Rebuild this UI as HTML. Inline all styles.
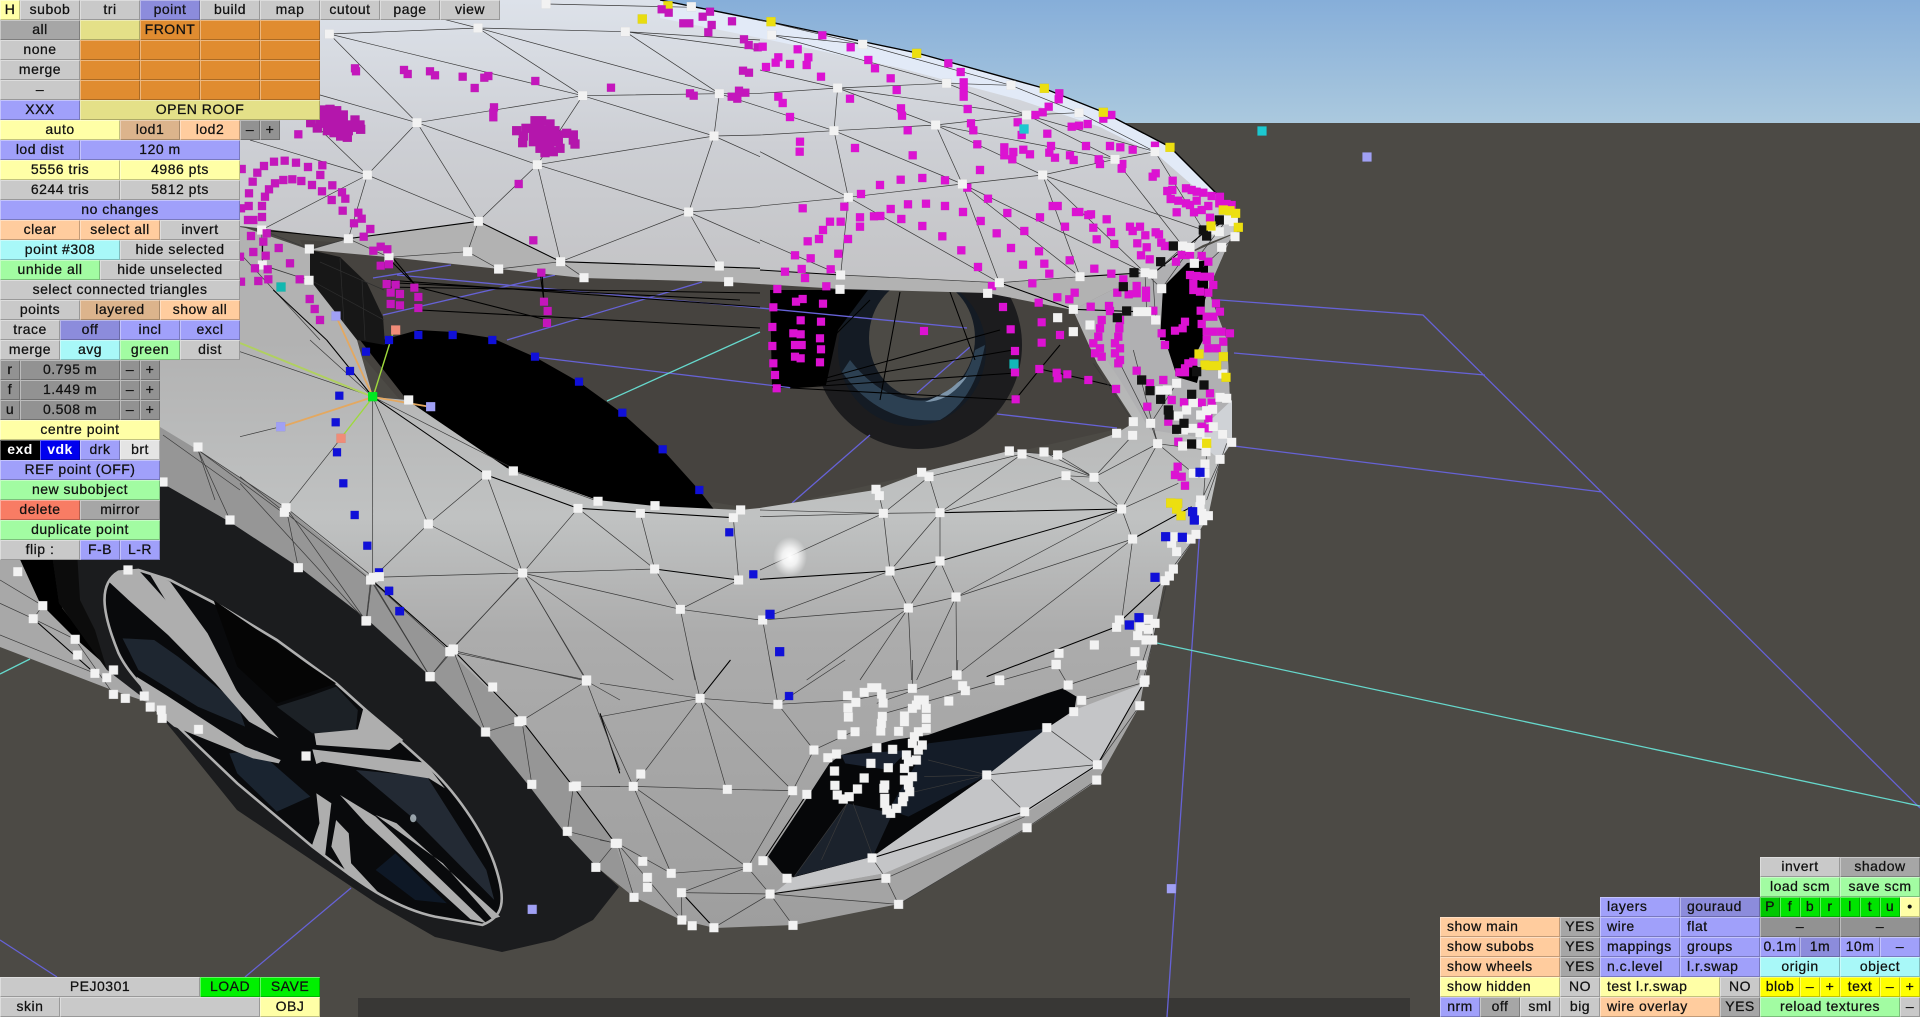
<!DOCTYPE html>
<html><head><meta charset="utf-8"><title>Car editor</title>
<style>
html,body{margin:0;padding:0;width:1920px;height:1017px;overflow:hidden;background:#4c4a45}
svg{position:absolute;left:0;top:0}
svg path{vector-effect:non-scaling-stroke;fill:none}
.w{stroke:#3a3a3a;stroke-width:.7}
.k{stroke:#000;stroke-width:1.05}
.p{stroke-linecap:square;stroke-width:9.2}
.sh{filter:drop-shadow(.7px .7px 0 rgba(0,0,0,.28))}
.b{position:absolute;height:20px;line-height:19px;text-align:center;font:14px/19px "Liberation Sans",sans-serif;letter-spacing:.5px;color:#111;-webkit-text-stroke:.25px #111;white-space:nowrap;box-sizing:border-box;box-shadow:inset 1px 1px 0 rgba(255,255,255,.38),inset -1px -1px 0 rgba(0,0,0,.24)}
.g{background:#c9c9c9}.d{background:#a6a6a6}.m{background:#929292}.v{background:#a0a0fa}.V{background:#8c8cdc}
.y{background:#ffffa6}.Y{background:#ffff00}.e{background:#e4e088}.o{background:#e08c30}.c{background:#ffcc9e}.t{background:#dcb48c}
.a{background:#a8f8f8}.n{background:#a2fca2}.N{background:#00f000}.r{background:#f87c64}.l{text-align:left;padding-left:7px}
</style></head><body>
<svg width="1920" height="1017" viewBox="0 0 1920 1017" xmlns="http://www.w3.org/2000/svg">
<defs>
<linearGradient id="sky" x1="0" y1="0" x2="0" y2="1"><stop offset="0" stop-color="#86aed9"/><stop offset="1" stop-color="#abc9de"/></linearGradient>
<linearGradient id="hood" gradientUnits="userSpaceOnUse" x1="0" y1="0" x2="0" y2="290"><stop offset="0" stop-color="#dde2ea"/><stop offset=".5" stop-color="#cdcfd4"/><stop offset="1" stop-color="#c3c3c5"/></linearGradient>
<linearGradient id="body" gradientUnits="userSpaceOnUse" x1="0" y1="340" x2="0" y2="930"><stop offset="0" stop-color="#b2b2b2"/><stop offset=".3" stop-color="#c0c2c2"/><stop offset=".5" stop-color="#acacac"/><stop offset="1" stop-color="#9e9e9e"/></linearGradient>
<radialGradient id="spec"><stop offset="0" stop-color="#fff"/><stop offset=".45" stop-color="#fff" stop-opacity=".8"/><stop offset="1" stop-color="#fff" stop-opacity="0"/></radialGradient>
</defs>
<rect width="1920" height="124" fill="url(#sky)"/>
<rect y="123" width="1920" height="894" fill="#4c4a45"/>
<rect x="358" y="998" width="1052" height="19" fill="#383735"/>

<!-- interior under hood -->
<polygon points="300,240 1100,290 1097,363 1135,425 760,510 700,500 400,400 340,330" fill="#46433f"/>

<!-- far wheel -->
<circle cx="918" cy="345" r="104" fill="#1c1c1e"/>
<ellipse cx="912" cy="350" rx="74" ry="76" fill="#141b24"/>
<path d="M842,372Q880,425 940,420Q975,400 985,345L975,350Q965,392 930,400Q885,405 850,360Z" style="fill:#2c4052"/>
<path d="M925,402Q950,402 968,375L940,395Z" style="fill:#7d95aa"/>
<ellipse cx="922" cy="338" rx="53" ry="60" fill="#4c4a45"/>
<polygon points="770,290 868,290 838,330 826,385 795,388 772,388" fill="#000"/>

<!-- black hole and dark inner wheel -->
<polygon points="360,340 383,340 418,330 453,332 492,338 535,357 579,382 622,413 663,450 699,490 716,512 640,510 597,500 507,468 407,400" fill="#000"/>
<polygon points="310,250 340,257 367,283 383,317 385,345 357,340 310,280" fill="#171717"/>
<path class="w" d="M320,262L384,290M314,282L384,320M340,258L345,340M362,280L365,340" style="stroke:#2e2e2e"/>

<!-- ground / interior lines -->
<g style="stroke-width:1.3">
<path d="M373,278L451,265M397,275L760,308L967,328M383,315L555,275M507,340L702,282M535,357L793,388M997,414L1117,428M792,503L870,435M917,393L970,347M1220,300L1423,315L1920,808M1234,353L1485,375M1234,446L1602,492M1200,527L1167,1017M0,940L57,977M351,888L245,977" stroke="#6662d6"/>
<path d="M1157,643L1920,806M607,401L760,332M0,674L30,659" stroke="#66d8cc"/>
</g>
<path class="k" d="M383,287L760,293M387,280L760,307M420,310L760,328M417,287L547,320M393,258L417,287M397,283L740,300M542,273L544,302M790,388L1013,350M790,388L1016,373M790,388L1015,400M790,388L1000,330M1015,400L1040,369M1040,369L1088,380M1040,369L1060,345M1088,380L1130,390M870,300L830,340M900,292L880,400M950,292L975,360"/>

<!-- body lower -->
<polygon points="240,226 310,250 310,280 357,340 373,397 407,400 507,468 597,500 655,506 740,510 760,508 875,490 922,472 1009,451 1057,455 1117,433 1135,422 1097,363 1073,310 1145,273 1232,235 1208,290 1227,340 1232,442 1220,460 1208,517 1197,535 1173,570 1163,587 1153,640 1144,682 1140,705 1098,780 1027,828 899,904 794,925 715,928 681,920 634,897 597,867 300,570 230,522 160,482 0,300" fill="url(#body)"/>
<polygon points="160,427 198,450 286,508 373,580 450,652 522,721 573,787 615,843 634,897 597,867 565,833 530,787 486,733 431,677 368,620 303,570 230,522 160,482" fill="#969696"/>
<!-- fender side shade -->
<polygon points="1073,310 1145,273 1232,235 1208,290 1227,340 1232,442 1150,430 1120,380" fill="#b0b0b2"/>
<polygon points="1200,430 1232,400 1232,442 1220,460 1196,440" fill="#cfd2d6"/>
<!-- eye -->
<polygon points="1160,340 1163,287 1187,263 1208,260 1208,290 1205,300 1203,340 1193,360 1200,370 1197,383 1177,377 1165,340" fill="#000"/>

<!-- hood -->
<polygon points="240,0 660,0 770,22 917,53 1043,88 1103,112 1170,147 1220,197 1237,213 1237,232 1203,245 1173,262 1145,273 1080,277 999,283 841,275 760,270 720,267 561,262 478,221 348,239 240,226" fill="url(#hood)"/>
<polygon points="660,0 770,22 917,53 1043,88 1103,112 1170,147 1220,197 1200,192 1160,157 1100,127 1020,100 900,68 770,40 660,18" fill="#e2eaf7"/>
<polygon points="310,250 348,239 478,221 561,262 720,267 841,275 999,283 1080,277 1145,273 1073,310 987,293 840,289 728,282 583,278 388,257" fill="#b2b2b2"/>
<path d="M660,0L770,22L917,53L1043,88L1103,112L1170,147L1220,197" stroke="#000" stroke-width="1.4"/>

<!-- far-left gray -->
<polygon points="0,555 18,555 40,603 75,638 111,670 150,703 112,690 0,647" fill="#a8a8a8"/>
<polygon points="18,555 75,555 62,608 111,670 75,638 40,603" fill="#000"/>

<!-- tyre -->
<polygon points="160,482 230,522 303,570 368,620 431,677 486,733 530,787 565,833 597,867 619,887 593,920 554,940 502,952 435,937 376,903 316,863 237,810 178,737 150,703 107,670 59,603 50,540 100,470" fill="#1b1c1e"/>
<polygon points="50,540 75,520 80,600 95,630 107,670 59,603" fill="#0c0c0c"/>

<!-- rim, zoom coords -->
<g transform="translate(0,570) scale(.3954,.3333)">
<path d="M300,5C250,40 255,120 300,250C320,300 345,330 450,470L600,640L790,830C880,910 980,1010 1100,1040L1220,1065C1270,1040 1285,1000 1250,880C1220,780 1150,660 1075,580L1000,500L850,340L700,210L560,110L430,30L350,0Z" style="fill:#090a0c;stroke:#b0b0b0;stroke-width:2.6"/>
<polygon points="310,205 390,210 450,260 600,400 620,470 500,410 350,300" fill="#1e2630"/>
<polygon points="580,550 650,540 785,680 700,725 600,610" fill="#1a2430"/>
<polygon points="900,600 1080,620 1230,900 1250,990 1050,750" fill="#232a34"/>
<polygon points="780,380 850,350 905,420 900,480 790,490 700,410" fill="#1c2126"/>
<polygon points="950,900 1000,850 1130,1000 1050,990" fill="#0e1826"/>
<polygon points="540,90 700,220 850,340 700,400 600,290" fill="#050505"/>
<g fill="#aeaeae">
<polygon points="295,5 350,0 480,170 610,380 705,505 630,455 545,340 425,195 325,90 275,35"/>
<polygon points="375,5 430,35 525,190 615,400 598,408 495,240"/>
<polygon points="345,320 420,375 620,530 710,570 705,580 640,565 440,470 375,405"/>
<polygon points="795,490 905,478 920,410 1020,510 985,540 800,525"/>
<polygon points="790,538 1075,578 1125,655 1085,625 815,575 800,582"/>
<polygon points="800,670 838,700 822,860 788,830 808,760"/>
<polygon points="850,750 882,790 888,880 955,965 880,915 838,830"/>
<polygon points="860,675 950,740 1230,1060 1190,1048 925,760"/>
<polygon points="950,735 1003,760 1265,1040 1245,1048 1120,880"/>
</g>
<ellipse cx="1045" cy="745" rx="8" ry="12" fill="#b8c4cc" opacity=".8"/>
</g>

<!-- grille, zoom 10 coords -->
<g transform="translate(600,660) scale(.3954,.3333)">
<polygon points="425,590 520,420 580,310 610,285 740,240 830,225 1130,100 1170,85 1205,110 1200,150 1130,205 980,345 690,590 490,652 460,640" fill="#060709"/>
<polygon points="490,650 625,430 740,460 690,590" fill="#1b222c"/>
<polygon points="830,250 1130,205 980,345 780,470 730,450" fill="#141c28"/>
<polygon points="610,285 780,270 730,330 620,310" fill="#1a2230"/>
<polygon points="440,700 490,652 690,590 980,345 1130,205 1200,150 1375,70 1255,320 1075,460 720,640" fill="#c4c5c7"/>
<polygon points="440,700 720,640 1075,460 1255,320 1365,137 1260,360 1080,505 755,733" fill="#a4a4a4"/>
<path class="w" d="M253,115L450,133M253,115L0,70M253,115L320,388M253,115L487,392M253,115L84,379M253,115L0,170M253,115L230,0M450,133L541,270M450,133L430,0M450,133L620,0M450,133L640,120M541,270L487,392M541,270L640,215M487,392L322,388M487,392L373,622M322,388L84,379M84,379L373,622M84,379L180,640M84,379L0,380M0,160L84,379M373,622L180,640M373,622L430,702M373,622L206,698M206,698L430,702M206,698L207,780M430,702L288,803M430,702L488,796M430,702L755,733M723,655L755,733M723,655L688,594M723,655L1074,470M755,733L1080,503M1074,455L978,345M978,345L1258,314M1130,203L1258,314M1080,503L1256,360M1258,314L1365,137M1184,75L1154,14M1184,75L1376,0M1218,121L1376,67M44,550L180,640M44,550L207,780M44,550L86,712M0,540L44,550M1011,62L720,160M1154,14L900,100M790,85L790,0M790,85L640,120M903,45L700,130M903,45L905,0M625,430L560,600M640,430L690,590M490,652L625,430M830,300L980,345M820,350L978,345M780,400L960,350"/>
<path class="k" d="M253,115L330,0M412,602L523,403M206,698L288,803M430,702L723,655M688,594L1074,455M1074,455L1258,314M1258,314L1376,67M0,160L50,340"/>
</g>

<!-- zoom 5 wires -->
<g transform="translate(240,0) scale(.33333)">
<path class="w" d="M268,102L714,84M714,84L1156,95M268,102L1028,287M714,84L1028,287M714,84L1438,281M1156,95L1438,281M268,102L531,368M1028,287L531,368M1028,287L1438,281M1028,287L1422,408M1028,287L892,494M531,368L382,525M531,368L715,664M531,368L892,494M382,525L715,664M382,525L65,690M382,525L325,716M240,285L531,368M30,420L382,525M200,350L382,525M892,494L715,664M892,494L962,785M892,494L1422,408M892,494L1346,636M1422,408L1346,636M1438,281L1422,408M1422,408L1560,405M715,664L683,755M962,785L1346,636M1346,636L1438,798M1346,636L1560,620M1346,636L1560,730M325,716L208,747M325,716L447,772M683,755L447,772M776,807L683,755M962,785L1032,833M776,807L962,785M65,690L208,747M0,680L65,690M65,690L67,795M67,795L207,841M1422,408L1560,470M1438,281L1560,320M1156,95L1560,150M1156,95L1560,120M1438,281L1560,280M0,760L240,1020M207,841L80,800M600,55L714,84M920,12L1360,22"/>
<path class="k" d="M715,664L325,716M715,664L962,785M962,785L1560,805M65,690L325,716M68,730L67,800M100,870L260,1020M450,780L530,860M900,815L912,905"/>
</g>
<!-- zoom 6 wires -->
<g transform="translate(760,0) scale(.33333)">
<path class="w" d="M233,264L0,280M233,264L560,250M233,264L222,392M233,264L527,375M233,264L800,345M560,250L800,345M560,250L753,256M222,392L527,375M222,392L0,405M222,392L265,592M222,392L607,552M527,375L800,345M527,375L607,552M527,375L848,525M527,375L1065,478M800,345L957,338M800,345L1065,478M800,345L1185,455M957,338L1185,455M1065,478L848,525M1065,478L1185,455M848,525L607,552M848,525L960,830M848,525L1155,818M848,525L1330,690M607,552L265,592M607,552L718,848M607,552L960,830M607,552L1155,818M265,592L0,618M265,592L242,825M265,592L718,848M0,455L265,592M0,720L242,825M242,825L718,848M718,848L960,830M0,210L233,264M0,320L222,392M35,105L560,250M0,60L308,133L753,256L957,338M35,105L308,133M1185,455L1330,690M1065,478L1270,740M1155,818L1205,866M1155,818L1160,935M1178,822L1187,960M1270,740L1178,822M1330,690L1205,866M1425,710L1330,800M1400,660L1300,790"/>
<path class="k" d="M0,810L242,825M960,830L1155,818M718,848L940,928M940,928L1133,935M1178,822L1330,700L1400,660"/>
</g>
<!-- zoom 7 wires -->
<g transform="translate(240,340) scale(.33333)">
<path class="w" d="M398,170L820,385M398,170L565,552M398,170L398,700M820,393L1074,484M740,405L565,552M740,405L848,699M1014,505L848,699M1014,505L1244,687M1201,520L1244,687M565,552L848,699M565,552L400,712M848,699L400,712M848,699L630,935M848,699L1244,687M848,699L1040,1020M848,699L1321,808M848,699L1300,1020M1244,687L1321,808M1321,808L1496,720M1321,808L1560,840M1321,808L1365,1020M1480,533L1496,720M138,503L303,295M138,503L175,683M138,503L400,712M0,410L392,720M0,430L378,843M392,720L378,843M392,720L630,935M392,720L570,1010M630,935L1040,1020M630,935L570,1010M138,503L378,843M0,290L122,260M0,35L398,170M210,0L398,170"/>
<path class="k" d="M398,170L740,405M740,405L1014,505M1014,505L1480,533M1244,687L1496,720M260,0L398,170"/>
</g>
<!-- left strip wires, real px -->
<path class="w" d="M198,450L286,508M198,450L230,520M198,450L286,515M163,435L240,490M198,450L215,500"/>
<!-- zoom 8 wires -->
<g transform="translate(760,340) scale(.33333)">
<path class="w" d="M748,333L893,345M786,342L507,410M786,342L540,518M852,336L1002,412M893,345L1002,412M786,342L1002,412M918,407L1002,412M918,407L1085,507M918,407L540,518M1002,412L1085,507M1002,412L1118,286M1002,412L1193,311M1085,507L1193,311M1085,507L1118,597M1085,507L1255,430M370,520L358,467M370,520L0,530M370,520L390,693M370,520L0,690M540,518L507,410M540,518L540,663M540,518L390,693M370,520L507,410M370,520L540,518M540,663L588,771M540,663L445,804M390,693L445,804M390,693L20,830M445,804L588,771M445,804L8,840M445,804L140,1020M445,804L300,1020M445,804L455,1020M588,771L590,1005M588,771L470,1020M588,771L1118,597M588,771L1085,507M1118,597L1085,840M1118,597L590,1005M8,840L40,1020M0,510L370,520M1193,311L1340,330M1193,311L1300,400M1172,250L1193,311M1000,70L1120,245M1060,30L1170,250M1120,30L1190,300M1250,130L1172,250M1340,340L1330,480M1380,360L1325,480M1400,310L1340,480M1300,600L1210,720M1185,850L1130,1020M1220,730L1150,1020"/>
<path class="k" d="M540,518L1085,507M540,663L1085,507M540,663L390,693M390,693L0,718M1118,597L1295,500M1215,720L1085,840M1070,860L680,1010"/>
</g>
<!-- zoom 9 wires -->
<g transform="translate(0,570) scale(.3954,.33333)">
<path class="w" d="M1323,10L1140,240M1323,10L1483,333M1140,240L1483,333M1146,240L1088,320M1146,240L1228,486M940,30L927,152M940,30L1088,320M1320,452L1483,333M1320,452L1228,486M1320,452L1345,643M1483,333L1568,390M1483,333L1568,600M1450,650L1435,784M1450,650L1568,650M1435,784L1556,820M1507,892L1556,820M108,107L84,146M0,100L84,146M0,30L108,107M84,146L190,208M0,195L240,310M190,208L287,373"/>
<path class="k" d="M940,30L1140,240M1146,240L1320,452M1320,452L1450,650M1450,650L1556,820M84,146L240,310"/>
</g>

<!-- axis lines -->
<path d="M373,397L393,333M373,397L341,438" stroke="#9ed93c" stroke-width="1.4"/>
<path d="M373,397L240,343" stroke="#b0d060" stroke-width="2"/>
<path d="M373,397L336,316M373,397L281,427M373,397L431,407" stroke="#e4a860" stroke-width="1.8"/>

<!-- specular -->
<ellipse cx="790" cy="557" rx="17" ry="20" fill="url(#spec)"/>

<!-- POINTS -->
<g class="sh">
<!-- zoom 5 -->
<g transform="translate(240,0) scale(.33333)">
<path class="p" stroke="#f2f2f2" d="M268,102h0M714,84h0M1156,95h0M918,12h0M1354,20h0M1028,287h0M1438,281h0M1422,408h0M531,368h0M382,525h0M715,664h0M892,494h0M1346,636h0M65,690h0M325,716h0M208,747h0M683,755h0M447,772h0M776,807h0M962,785h0M1032,833h0M1438,798h0M1466,845h0M67,795h0M207,841h0"/>
<path class="p" stroke="#e8dc10" d="M1207,57h0M1284,17h0"/>
<path class="p" stroke="#c416bc" style="stroke-width:8.2" d="M345,205h0M348,214h0M492,210h0M503,222h0M570,214h0M585,226h0M668,230h0M745,228h0M733,233h0M704,264h0M886,243h0M1113,263h0M1350,280h0M1361,287h0M1509,212h0M1527,218h0M1475,290h0M1497,272h0M1516,278h0M1492,296h0M762,322h0M760,338h0M760,352h0M175,403h0M836,552h0M880,721h0M904,818h0M1265,28h0M1286,38h0M1410,35h0M1388,50h0M1415,75h0M1405,97h0M1330,70h0M1348,70h0M1476,64h0M1512,118h0M1526,135h0M1553,142h0M5,507h0M52,518h0M72,498h0M102,485h0M134,482h0M168,488h0M204,501h0M247,496h0M241,525h0M38,545h0M105,550h0M130,540h0M157,538h0M184,543h0M216,555h0M277,556h0M246,574h0M27,580h0M87,568h0M75,590h0M306,577h0M316,596h0M275,600h0M66,618h0M26,618h0M3,625h0M66,651h0M40,660h0M24,660h0M308,632h0M355,638h0M365,656h0M342,670h0M391,687h0M371,710h0M33,708h0M80,700h0M70,725h0M116,744h0M40,756h0M77,767h0M150,790h0M45,805h0M83,808h0M179,838h0M55,843h0M85,838h0M0,770h0M3,845h0M209,897h0M224,927h0M240,960h0M400,752h0M422,740h0M442,748h0M422,797h0M447,793h0M440,852h0M467,854h0M452,878h0M480,882h0M452,912h0M480,916h0M523,863h0M535,891h0M535,924h0M912,905h0M923,933h0M921,969h0"/>
<path class="p" stroke="#b416ac" d="M250,330h0M270,328h0M290,332h0M310,345h0M345,360h0M360,375h0M362,388h0M250,350h0M270,350h0M290,352h0M310,365h0M330,375h0M240,370h0M262,372h0M285,375h0M305,385h0M325,392h0M345,382h0M212,368h0M232,384h0M262,392h0M282,398h0M302,408h0M322,412h0M300,392h0M885,362h0M905,362h0M930,372h0M858,385h0M878,385h0M900,385h0M925,390h0M945,392h0M830,392h0M850,408h0M880,405h0M905,410h0M930,410h0M955,405h0M980,400h0M1000,405h0M848,428h0M880,425h0M905,430h0M930,430h0M955,425h0M1000,420h0M1005,432h0M900,445h0M925,450h0M940,455h0M960,445h0M915,458h0"/>
</g>
<!-- zoom 6 -->
<g transform="translate(760,0) scale(.33333)">
<path class="p" stroke="#dc12d2" style="stroke-width:8.2" d="M8,140h0M113,148h0M55,172h0M47,188h0M90,192h0M145,172h0M140,195h0M18,201h0M183,230h0M325,180h0M345,205h0M272,142h0M187,106h0M392,235h0M410,270h0M270,296h0M55,290h0M68,309h0M90,351h0M423,325h0M426,347h0M443,391h0M285,444h0M120,425h0M119,455h0M565,190h0M602,216h0M611,247h0M611,267h0M611,290h0M623,327h0M633,370h0M640,391h0M652,433h0M660,510h0M458,466h0M898,280h0M896,298h0M866,320h0M848,337h0M826,345h0M773,367h0M785,405h0M862,401h0M935,380h0M957,377h0M983,372h0M733,442h0M733,466h0M760,456h0M757,478h0M790,449h0M810,463h0M873,438h0M868,458h0M885,473h0M930,466h0M941,480h0M978,438h0M1050,438h0M1081,442h0M1118,449h0M1016,478h0M1020,492h0M1087,492h0M1085,506h0M1030,356h0M1054,345h0M1185,437h0M1187,520h0M1178,530h0M1238,542h0M1222,573h0M1237,570h0M1232,597h0M1255,602h0M1278,610h0M1290,615h0M1310,602h0M1325,630h0M1345,618h0M1302,637h0M1250,637h0M1350,653h0M1278,565h0M1295,570h0M1310,575h0M1330,578h0M1355,588h0M1380,590h0M1378,610h0M1400,612h0M1415,615h0M360,555h0M422,539h0M487,534h0M555,541h0M622,563h0M684,596h0M303,582h0M128,625h0M253,620h0M392,627h0M444,613h0M498,611h0M555,618h0M609,636h0M662,663h0M742,639h0M840,652h0M878,618h0M893,618h0M948,636h0M958,636h0M985,645h0M993,643h0M1040,658h0M1000,683h0M1053,696h0M1010,718h0M1063,732h0M915,680h0M793,693h0M710,700h0M547,709h0M487,678h0M424,657h0M300,652h0M300,680h0M342,649h0M361,648h0M210,665h0M242,665h0M189,690h0M177,717h0M143,724h0M264,717h0M235,761h0M105,766h0M152,775h0M125,807h0M75,815h0M135,834h0M212,808h0M199,859h0M52,867h0M604,751h0M753,744h0M837,754h0M654,801h0M789,794h0M853,791h0M868,821h0M929,781h0M1003,806h0M1054,821h0M1090,838h0M1110,680h0M1118,693h0M1140,680h0M1156,706h0M1187,697h0M1197,703h0M1204,728h0M1215,738h0M1132,730h0M1160,742h0M1143,766h0M1169,778h0M1248,785h0M1265,765h0M1290,765h0M1325,768h0M1345,785h0M1290,825h0M1310,828h0M1330,830h0M1350,830h0M1300,850h0M1360,855h0M1300,870h0M1320,875h0M1345,878h0M817,850h0M696,858h0M836,908h0M892,892h0M928,898h0M944,878h0M992,920h0M1072,878h0M1106,883h0M1130,858h0M1130,880h0M1158,872h0M1158,893h0M1047,918h0M1050,933h0M729,921h0M845,967h0M752,988h0M492,993h0M189,911h0M40,922h0M108,905h0M128,897h0M122,961h0M183,965h0M37,981h0M100,1000h0M122,1003h0M180,1015h0M1025,960h0M1020,985h0M1015,1010h0M1080,960h0M1078,985h0M1075,1010h0M1205,1000h0M1245,992h0M1268,985h0M1275,965h0M1368,910h0M1380,935h0M1322,932h0M1340,950h0M1360,950h0M1325,972h0M1340,995h0M1360,995h0M1385,995h0M1410,1000h0M900,1005h0M1180,932h0"/>
<path class="p" stroke="#f2f2f2" d="M233,264h0M222,392h0M527,375h0M560,250h0M753,256h0M308,133h0M35,105h0M800,345h0M957,338h0M1065,478h0M848,525h0M607,552h0M265,592h0M242,825h0M240,868h0M718,848h0M683,880h0M960,830h0M1155,818h0M1178,822h0M1205,866h0M940,928h0M893,953h0M990,975h0M940,995h0M1133,935h0M1160,935h0M1187,960h0M1185,455h0M1268,738h0M1290,742h0M1303,790h0M1400,660h0M1355,690h0M1378,695h0M1420,665h0M1425,710h0M1385,742h0"/>
<path class="p" stroke="#111" d="M1122,818h0M1240,738h0M1202,785h0M1330,690h0M1378,660h0M1340,708h0M1090,860h0M1100,933h0M1072,953h0"/>
<path class="p" stroke="#ecdf10" d="M33,65h0M470,160h0M853,265h0M1030,337h0M1230,442h0M1390,630h0M1410,632h0M1427,640h0M1435,682h0M1353,678h0"/>
</g>
<!-- zoom 7 -->
<g transform="translate(240,340) scale(.33333)">
<path class="p" stroke="#1010d8" style="stroke-width:8.2" d="M378,35h0M330,93h0M298,167h0M287,247h0M291,337h0M310,430h0M344,525h0M382,617h0M417,697h0M447,752h0M480,814h0M447,0h0M535,-15h0M638,-15h0M757,0h0M885,50h0M1017,125h0M1147,218h0M1268,328h0M1378,450h0M1468,577h0M1540,703h0"/>
<path class="p" stroke="#f2f2f2" d="M506,180h0M740,405h0M820,393h0M1014,505h0M1074,484h0M1201,520h0M1245,497h0M1480,533h0M1502,510h0M565,552h0M848,699h0M1244,687h0M1496,720h0M1321,808h0M138,503h0M133,517h0M175,683h0M400,712h0M392,720h0M418,710h0M378,843h0M630,935h0M640,927h0M570,1010h0M1040,1020h0"/>
<path class="p" stroke="#00e820" d="M398,170h0"/>
<path class="p" stroke="#a0a0f4" d="M572,200h0M122,260h0M288,-72h0"/>
<path class="p" stroke="#f08c78" d="M303,295h0M467,-30h0"/>
</g>
<!-- zoom 8 -->
<g transform="translate(760,340) scale(.33333)">
<path class="p" stroke="#dc12d2" style="stroke-width:8.2" d="M765,33h0M765,97h0M767,178h0M845,8h0M838,87h0M890,98h0M893,115h0M922,103h0M985,120h0M1068,147h0M1130,92h0M1170,130h0M1210,120h0M1162,200h0M1235,180h0M1272,187h0M1225,245h0M1253,380h0M1245,405h0M1265,410h0M1275,437h0M37,18h0M105,15h0M125,15h0M183,28h0M40,70h0M45,105h0M50,145h0M105,50h0M122,55h0M180,67h0M1215,15h0M1258,97h0M1275,97h0M1275,85h0M1285,70h0M1300,65h0M1345,235h0M1350,160h0M1355,188h0M1325,260h0M1345,265h0M1325,188h0M1255,305h0M1340,0h0M1370,25h0M1345,25h0M1390,5h0M1000,10h0M1020,25h0M1005,40h0M1025,50h0M1065,10h0M1080,25h0M1065,40h0M1080,60h0M1075,70h0"/>
<path class="p" stroke="#f2f2f2" d="M748,333h0M786,342h0M852,336h0M893,345h0M918,407h0M1002,412h0M1085,507h0M1118,597h0M370,520h0M540,518h0M540,663h0M390,693h0M588,771h0M445,804h0M348,448h0M358,467h0M485,397h0M507,410h0M8,840h0M590,1005h0M1120,245h0M1172,250h0M1070,280h0M1118,286h0M1193,311h0M1250,130h0M1200,152h0M1222,150h0M1255,228h0M1280,210h0M1300,188h0M1270,270h0M1297,265h0M1268,318h0M1322,225h0M1340,212h0M1358,208h0M1320,278h0M1360,260h0M1380,172h0M1400,175h0M1388,102h0M1320,312h0M1340,305h0M1338,335h0M1380,358h0M1388,283h0M1415,307h0M1300,400h0M1335,372h0M1335,400h0M1322,480h0M1320,500h0M1325,520h0M1345,527h0M1328,542h0M1308,583h0M1293,597h0M1240,590h0M1235,610h0M1250,635h0M1240,687h0M1228,708h0M1215,722h0M1078,840h0M1070,862h0M1165,838h0M1185,850h0M1140,860h0M1165,868h0M1133,887h0M1158,900h0M1178,900h0M1003,915h0M1125,935h0M897,940h0M888,973h0M1145,975h0M718,1020h0M1155,1020h0"/>
<path class="p" stroke="#ecdf10" d="M1317,42h0M1390,50h0M1335,75h0M1350,77h0M1370,77h0M1398,112h0M1340,310h0M1232,489h0M1253,490h0M1250,507h0M1263,527h0"/>
<path class="p" stroke="#1010d8" d="M30,823h0M59,935h0M1298,515h0M1303,540h0M1217,590h0M1267,592h0M1185,712h0M1137,833h0M1108,855h0M1320,397h0"/>
<path class="p" stroke="#111" d="M1145,120h0M1170,152h0M1202,178h0M1227,225h0M1272,250h0M1250,268h0M1295,312h0M1332,135h0M1295,163h0M1310,95h0M1225,210h0"/>
<path class="p" stroke="#12b8b8" d="M762,72h0"/>
</g>
<!-- zoom 9 -->
<g transform="translate(0,570) scale(.3954,.33333)">
<path class="p" stroke="#f2f2f2" d="M108,107h0M84,146h0M190,208h0M196,255h0M240,310h0M287,300h0M270,323h0M287,373h0M317,385h0M365,378h0M380,411h0M408,420h0M410,445h0M502,478h0M774,558h0M927,152h0M1088,320h0M1228,486h0M1345,643h0M1435,784h0M1507,892h0M1146,240h0M1138,245h0M1246,351h0M1320,452h0M1312,455h0M1483,333h0M1458,648h0M1450,650h0M1556,820h0M45,5h0"/>
<path class="p" stroke="#1010d8" style="stroke-width:8.2" d="M984,63h0M1010,123h0"/>
<path class="p" stroke="#a0a0f4" d="M1346,1018h0"/>
</g>
<!-- zoom 10 -->
<g transform="translate(600,660) scale(.3954,.33333)">
<path class="p" stroke="#f2f2f2" d="M253,115h0M450,133h0M541,270h0M487,392h0M322,388h0M84,379h0M103,342h0M44,550h0M108,604h0M120,652h0M120,682h0M86,712h0M180,640h0M206,698h0M207,780h0M233,797h0M288,803h0M373,622h0M430,702h0M412,602h0M473,655h0M523,403h0M576,293h0M598,282h0M488,796h0M755,733h0M723,655h0M688,594h0M978,345h0M1074,455h0M1080,503h0M1256,360h0M1258,314h0M1130,203h0M1198,155h0M1218,121h0M1184,75h0M1154,14h0M1011,62h0M882,123h0M924,92h0M917,77h0M903,45h0M790,85h0M1370,15h0M1376,67h0M1365,137h0M687,83h0M700,83h0M668,97h0M712,102h0M626,107h0M647,127h0M716,129h0M627,143h0M628,171h0M714,169h0M712,190h0M710,213h0M645,215h0M612,224h0M700,263h0M740,268h0M685,310h0M729,323h0M593,333h0M668,354h0M594,376h0M651,387h0M600,405h0M630,410h0M615,417h0M720,375h0M718,385h0M720,415h0M720,430h0M725,450h0M735,460h0M750,445h0M765,425h0M768,410h0M783,395h0M780,375h0M770,360h0M790,350h0M770,325h0M780,305h0M800,300h0M775,285h0M805,270h0M790,250h0M815,255h0M795,230h0M805,215h0M825,205h0M755,214h0M770,168h0M770,185h0M825,175h0M805,120h0M820,120h0M790,145h0M825,145h0M800,135h0"/>
<path class="p" stroke="#1010d8" style="stroke-width:8.2" d="M478,108h0"/>
<path class="p" stroke="#a0a0f4" d="M1445,686h0"/>
</g>
<!-- misc squares, real px -->
<path class="p" stroke="#f2f2f2" d="M198,447h0M163,482h0M230,520h0M128,570h0"/>
<path class="p" stroke="#12b8b0" d="M281,287h0"/>
<path class="p" stroke="#1cc8d0" d="M1024,129h0M1262,131h0"/>
<path class="p" stroke="#a0a0f4" d="M1367,157h0"/>
</g>
</svg>

<!-- top-left panel -->
<div class="b y" style="left:0;top:0;width:20px">H</div>
<div class="b g" style="left:20px;top:0;width:60px">subob</div>
<div class="b g" style="left:80px;top:0;width:60px">tri</div>
<div class="b V" style="left:140px;top:0;width:60px">point</div>
<div class="b g" style="left:200px;top:0;width:60px">build</div>
<div class="b g" style="left:260px;top:0;width:60px">map</div>
<div class="b g" style="left:320px;top:0;width:60px">cutout</div>
<div class="b g" style="left:380px;top:0;width:60px">page</div>
<div class="b g" style="left:440px;top:0;width:60px">view</div>

<div class="b d" style="left:0;top:20px;width:80px">all</div>
<div class="b e" style="left:80px;top:20px;width:60px"></div>
<div class="b o" style="left:140px;top:20px;width:60px">FRONT</div>
<div class="b o" style="left:200px;top:20px;width:60px"></div>
<div class="b o" style="left:260px;top:20px;width:60px"></div>

<div class="b g" style="left:0;top:40px;width:80px">none</div>
<div class="b o" style="left:80px;top:40px;width:60px"></div>
<div class="b o" style="left:140px;top:40px;width:60px"></div>
<div class="b o" style="left:200px;top:40px;width:60px"></div>
<div class="b o" style="left:260px;top:40px;width:60px"></div>

<div class="b g" style="left:0;top:60px;width:80px">merge</div>
<div class="b o" style="left:80px;top:60px;width:60px"></div>
<div class="b o" style="left:140px;top:60px;width:60px"></div>
<div class="b o" style="left:200px;top:60px;width:60px"></div>
<div class="b o" style="left:260px;top:60px;width:60px"></div>

<div class="b g" style="left:0;top:80px;width:80px">–</div>
<div class="b o" style="left:80px;top:80px;width:60px"></div>
<div class="b o" style="left:140px;top:80px;width:60px"></div>
<div class="b o" style="left:200px;top:80px;width:60px"></div>
<div class="b o" style="left:260px;top:80px;width:60px"></div>

<div class="b v" style="left:0;top:100px;width:80px">XXX</div>
<div class="b e" style="left:80px;top:100px;width:240px">OPEN ROOF</div>

<div class="b y" style="left:0;top:120px;width:120px">auto</div>
<div class="b t" style="left:120px;top:120px;width:60px">lod1</div>
<div class="b c" style="left:180px;top:120px;width:60px">lod2</div>
<div class="b m" style="left:240px;top:120px;width:20px">–</div>
<div class="b m" style="left:260px;top:120px;width:20px">+</div>

<div class="b v" style="left:0;top:140px;width:80px">lod dist</div>
<div class="b v" style="left:80px;top:140px;width:160px">120 m</div>

<div class="b y" style="left:0;top:160px;width:120px">5556 tris</div>
<div class="b y" style="left:120px;top:160px;width:120px">4986 pts</div>
<div class="b g" style="left:0;top:180px;width:120px">6244 tris</div>
<div class="b g" style="left:120px;top:180px;width:120px">5812 pts</div>
<div class="b v" style="left:0;top:200px;width:240px">no changes</div>

<div class="b c" style="left:0;top:220px;width:80px">clear</div>
<div class="b c" style="left:80px;top:220px;width:80px">select all</div>
<div class="b g" style="left:160px;top:220px;width:80px">invert</div>

<div class="b a" style="left:0;top:240px;width:120px">point #308</div>
<div class="b g" style="left:120px;top:240px;width:120px">hide selected</div>
<div class="b n" style="left:0;top:260px;width:100px">unhide all</div>
<div class="b g" style="left:100px;top:260px;width:140px">hide unselected</div>
<div class="b g" style="left:0;top:280px;width:240px">select connected triangles</div>

<div class="b g" style="left:0;top:300px;width:80px">points</div>
<div class="b t" style="left:80px;top:300px;width:80px">layered</div>
<div class="b c" style="left:160px;top:300px;width:80px">show all</div>

<div class="b g" style="left:0;top:320px;width:60px">trace</div>
<div class="b V" style="left:60px;top:320px;width:60px">off</div>
<div class="b v" style="left:120px;top:320px;width:60px">incl</div>
<div class="b v" style="left:180px;top:320px;width:60px">excl</div>

<div class="b g" style="left:0;top:340px;width:60px">merge</div>
<div class="b a" style="left:60px;top:340px;width:60px">avg</div>
<div class="b n" style="left:120px;top:340px;width:60px">green</div>
<div class="b g" style="left:180px;top:340px;width:60px">dist</div>

<div class="b m" style="left:0;top:360px;width:20px">r</div>
<div class="b m" style="left:20px;top:360px;width:100px">0.795 m</div>
<div class="b m" style="left:120px;top:360px;width:20px">–</div>
<div class="b m" style="left:140px;top:360px;width:20px">+</div>
<div class="b m" style="left:0;top:380px;width:20px">f</div>
<div class="b m" style="left:20px;top:380px;width:100px">1.449 m</div>
<div class="b m" style="left:120px;top:380px;width:20px">–</div>
<div class="b m" style="left:140px;top:380px;width:20px">+</div>
<div class="b m" style="left:0;top:400px;width:20px">u</div>
<div class="b m" style="left:20px;top:400px;width:100px">0.508 m</div>
<div class="b m" style="left:120px;top:400px;width:20px">–</div>
<div class="b m" style="left:140px;top:400px;width:20px">+</div>

<div class="b y" style="left:0;top:420px;width:160px">centre point</div>
<div class="b" style="left:0;top:440px;width:40px;background:#000;color:#fff;-webkit-text-stroke:0;font-weight:bold">exd</div>
<div class="b" style="left:40px;top:440px;width:40px;background:#0000ee;color:#fff;-webkit-text-stroke:0;font-weight:bold">vdk</div>
<div class="b v" style="left:80px;top:440px;width:40px">drk</div>
<div class="b" style="left:120px;top:440px;width:40px;background:#e4e4e4">brt</div>
<div class="b v" style="left:0;top:460px;width:160px">REF point (OFF)</div>
<div class="b n" style="left:0;top:480px;width:160px">new subobject</div>
<div class="b r" style="left:0;top:500px;width:80px">delete</div>
<div class="b d" style="left:80px;top:500px;width:80px">mirror</div>
<div class="b n" style="left:0;top:520px;width:160px">duplicate point</div>
<div class="b g" style="left:0;top:540px;width:80px">flip :</div>
<div class="b v" style="left:80px;top:540px;width:40px">F-B</div>
<div class="b v" style="left:120px;top:540px;width:40px">L-R</div>

<!-- bottom-left -->
<div class="b g" style="left:0;top:977px;width:200px">PEJ0301</div>
<div class="b" style="left:200px;top:977px;width:60px;background:#00f000">LOAD</div>
<div class="b" style="left:260px;top:977px;width:60px;background:#00f000">SAVE</div>
<div class="b g" style="left:0;top:997px;width:60px">skin</div>
<div class="b g" style="left:60px;top:997px;width:200px"></div>
<div class="b y" style="left:260px;top:997px;width:60px">OBJ</div>

<!-- bottom-right -->
<div class="b g" style="left:1760px;top:857px;width:80px">invert</div>
<div class="b d" style="left:1840px;top:857px;width:80px">shadow</div>
<div class="b n" style="left:1760px;top:877px;width:80px">load scm</div>
<div class="b n" style="left:1840px;top:877px;width:80px">save scm</div>

<div class="b v l" style="left:1600px;top:897px;width:80px">layers</div>
<div class="b V l" style="left:1680px;top:897px;width:80px">gouraud</div>
<div class="b" style="left:1760px;top:897px;width:20px;background:#00c800">P</div>
<div class="b" style="left:1780px;top:897px;width:20px;background:#00e400">f</div>
<div class="b" style="left:1800px;top:897px;width:20px;background:#00e400">b</div>
<div class="b" style="left:1820px;top:897px;width:20px;background:#00e400">r</div>
<div class="b" style="left:1840px;top:897px;width:20px;background:#00e400">l</div>
<div class="b" style="left:1860px;top:897px;width:20px;background:#00e400">t</div>
<div class="b" style="left:1880px;top:897px;width:20px;background:#00e400">u</div>
<div class="b y" style="left:1900px;top:897px;width:20px">•</div>

<div class="b c l" style="left:1440px;top:917px;width:120px">show main</div>
<div class="b d" style="left:1560px;top:917px;width:40px">YES</div>
<div class="b v l" style="left:1600px;top:917px;width:80px">wire</div>
<div class="b v l" style="left:1680px;top:917px;width:80px">flat</div>
<div class="b m" style="left:1760px;top:917px;width:80px">–</div>
<div class="b m" style="left:1840px;top:917px;width:80px">–</div>

<div class="b c l" style="left:1440px;top:937px;width:120px">show subobs</div>
<div class="b d" style="left:1560px;top:937px;width:40px">YES</div>
<div class="b v l" style="left:1600px;top:937px;width:80px">mappings</div>
<div class="b v l" style="left:1680px;top:937px;width:80px">groups</div>
<div class="b v" style="left:1760px;top:937px;width:40px">0.1m</div>
<div class="b V" style="left:1800px;top:937px;width:40px">1m</div>
<div class="b v" style="left:1840px;top:937px;width:40px">10m</div>
<div class="b v" style="left:1880px;top:937px;width:40px">–</div>

<div class="b c l" style="left:1440px;top:957px;width:120px">show wheels</div>
<div class="b d" style="left:1560px;top:957px;width:40px">YES</div>
<div class="b v l" style="left:1600px;top:957px;width:80px">n.c.level</div>
<div class="b v l" style="left:1680px;top:957px;width:80px">l.r.swap</div>
<div class="b a" style="left:1760px;top:957px;width:80px">origin</div>
<div class="b a" style="left:1840px;top:957px;width:80px">object</div>

<div class="b y l" style="left:1440px;top:977px;width:120px">show hidden</div>
<div class="b g" style="left:1560px;top:977px;width:40px">NO</div>
<div class="b y l" style="left:1600px;top:977px;width:120px">test l.r.swap</div>
<div class="b g" style="left:1720px;top:977px;width:40px">NO</div>
<div class="b Y" style="left:1760px;top:977px;width:40px">blob</div>
<div class="b Y" style="left:1800px;top:977px;width:20px">–</div>
<div class="b Y" style="left:1820px;top:977px;width:20px">+</div>
<div class="b Y" style="left:1840px;top:977px;width:40px">text</div>
<div class="b Y" style="left:1880px;top:977px;width:20px">–</div>
<div class="b Y" style="left:1900px;top:977px;width:20px">+</div>

<div class="b v" style="left:1440px;top:997px;width:40px">nrm</div>
<div class="b d" style="left:1480px;top:997px;width:40px">off</div>
<div class="b g" style="left:1520px;top:997px;width:40px">sml</div>
<div class="b g" style="left:1560px;top:997px;width:40px">big</div>
<div class="b c l" style="left:1600px;top:997px;width:120px">wire overlay</div>
<div class="b d" style="left:1720px;top:997px;width:40px">YES</div>
<div class="b n" style="left:1760px;top:997px;width:140px">reload textures</div>
<div class="b g" style="left:1900px;top:997px;width:20px">–</div>
</body></html>
